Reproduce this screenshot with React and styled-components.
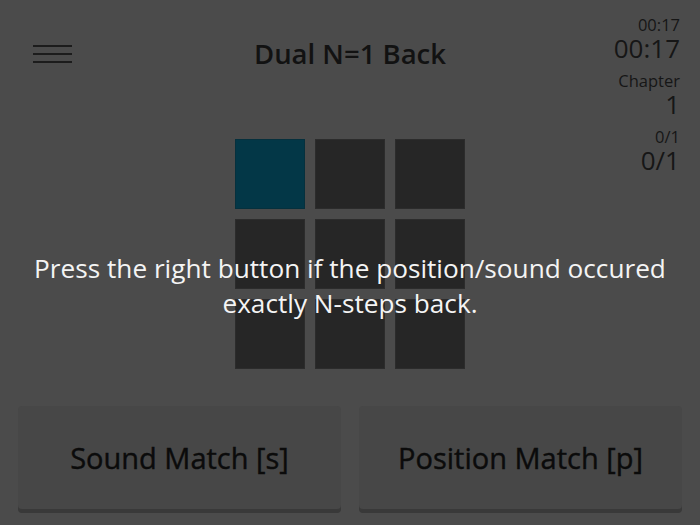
import React from 'react';
import styled, { createGlobalStyle } from 'styled-components';

const GlobalStyle = createGlobalStyle`
  html, body {
    margin: 0;
    padding: 0;
    background: #4b4b4b;
  }
  * {
    box-sizing: border-box;
  }
`;

const Page = styled.div`
  position: relative;
  display: flex;
  flex-direction: column;
  height: 525px;
  padding: 0 18px 12px 18px;
  background: #4b4b4b;
  font-family: "Open Sans", "Liberation Sans", sans-serif;
  color: #111;
`;

const Top = styled.div`
  display: grid;
  grid-template-columns: 1fr auto 1fr;
`;

const Menu = styled.div`
  display: flex;
  flex-direction: column;
  gap: 6px;
  width: 39px;
  margin: 45px 0 0 15px;
`;

const MenuLine = styled.span`
  display: block;
  height: 2px;
  background: #1c1c1c;
`;

const Center = styled.div`
  display: flex;
  flex-direction: column;
  align-items: center;
`;

const Title = styled.h1`
  margin: 36px 0 0 0;
  font-size: 27.5px;
  line-height: 36px;
  font-weight: 600;
  color: #121212;
`;

const Board = styled.div`
  display: grid;
  grid-template-columns: repeat(3, 70px);
  grid-auto-rows: 70px;
  gap: 10px;
  margin-top: 67px;
`;

const Cell = styled.div`
  background: ${p => (p.$active ? '#033747' : '#262626')};
  border: 1px solid ${p => (p.$active ? '#06303d' : '#2c2c2c')};
`;

const Stats = styled.div`
  justify-self: end;
  display: flex;
  flex-direction: column;
  align-items: flex-end;
  gap: 10px;
  padding: 15px 2px 0 0;
`;

const Stat = styled.div`
  display: flex;
  flex-direction: column;
  align-items: flex-end;
`;

const Small = styled.span`
  font-size: 16.5px;
  line-height: 20px;
  color: #161616;
`;

const Big = styled.span`
  font-size: 26px;
  line-height: 26px;
  color: #161616;
`;

const Hint = styled.p`
  position: absolute;
  left: 0;
  right: 0;
  top: 251px;
  margin: 0;
  text-align: center;
  font-size: 26.2px;
  line-height: 35px;
  color: #f4f4f4;
`;

const Buttons = styled.div`
  display: grid;
  grid-template-columns: 1fr 1fr;
  gap: 18px;
  margin-top: auto;
`;

const MatchButton = styled.button`
  height: 103px;
  margin-bottom: 4px;
  border: none;
  border-radius: 4px;
  background: #474747;
  box-shadow: 0 4px 0 #393939;
  font-family: inherit;
  font-size: 29px;
  font-weight: 400;
  color: #0b0b0b;
  -webkit-text-stroke: 0.4px #0b0b0b;
  cursor: pointer;
`;

const cells = [true, false, false, false, false, false, false, false, false];

const stats = [
  { small: '00:17', big: '00:17' },
  { small: 'Chapter', big: '1' },
  { small: '0/1', big: '0/1' },
];

const App = () => {
  return (
    <Page>
      <GlobalStyle />
      <Top>
        <div>
          <Menu>
            <MenuLine />
            <MenuLine />
            <MenuLine />
          </Menu>
        </div>
        <Center>
          <Title>Dual N=1 Back</Title>
          <Board>
            {cells.map((on, i) => (
              <Cell key={i} $active={on} />
            ))}
          </Board>
        </Center>
        <Stats>
          {stats.map(s => (
            <Stat key={s.small}>
              <Small>{s.small}</Small>
              <Big>{s.big}</Big>
            </Stat>
          ))}
        </Stats>
      </Top>
      <Hint>
        Press the right button if the position/sound occured
        <br />
        exactly N-steps back.
      </Hint>
      <Buttons>
        <MatchButton>Sound Match [s]</MatchButton>
        <MatchButton>Position Match [p]</MatchButton>
      </Buttons>
    </Page>
  );
};

export default App;
